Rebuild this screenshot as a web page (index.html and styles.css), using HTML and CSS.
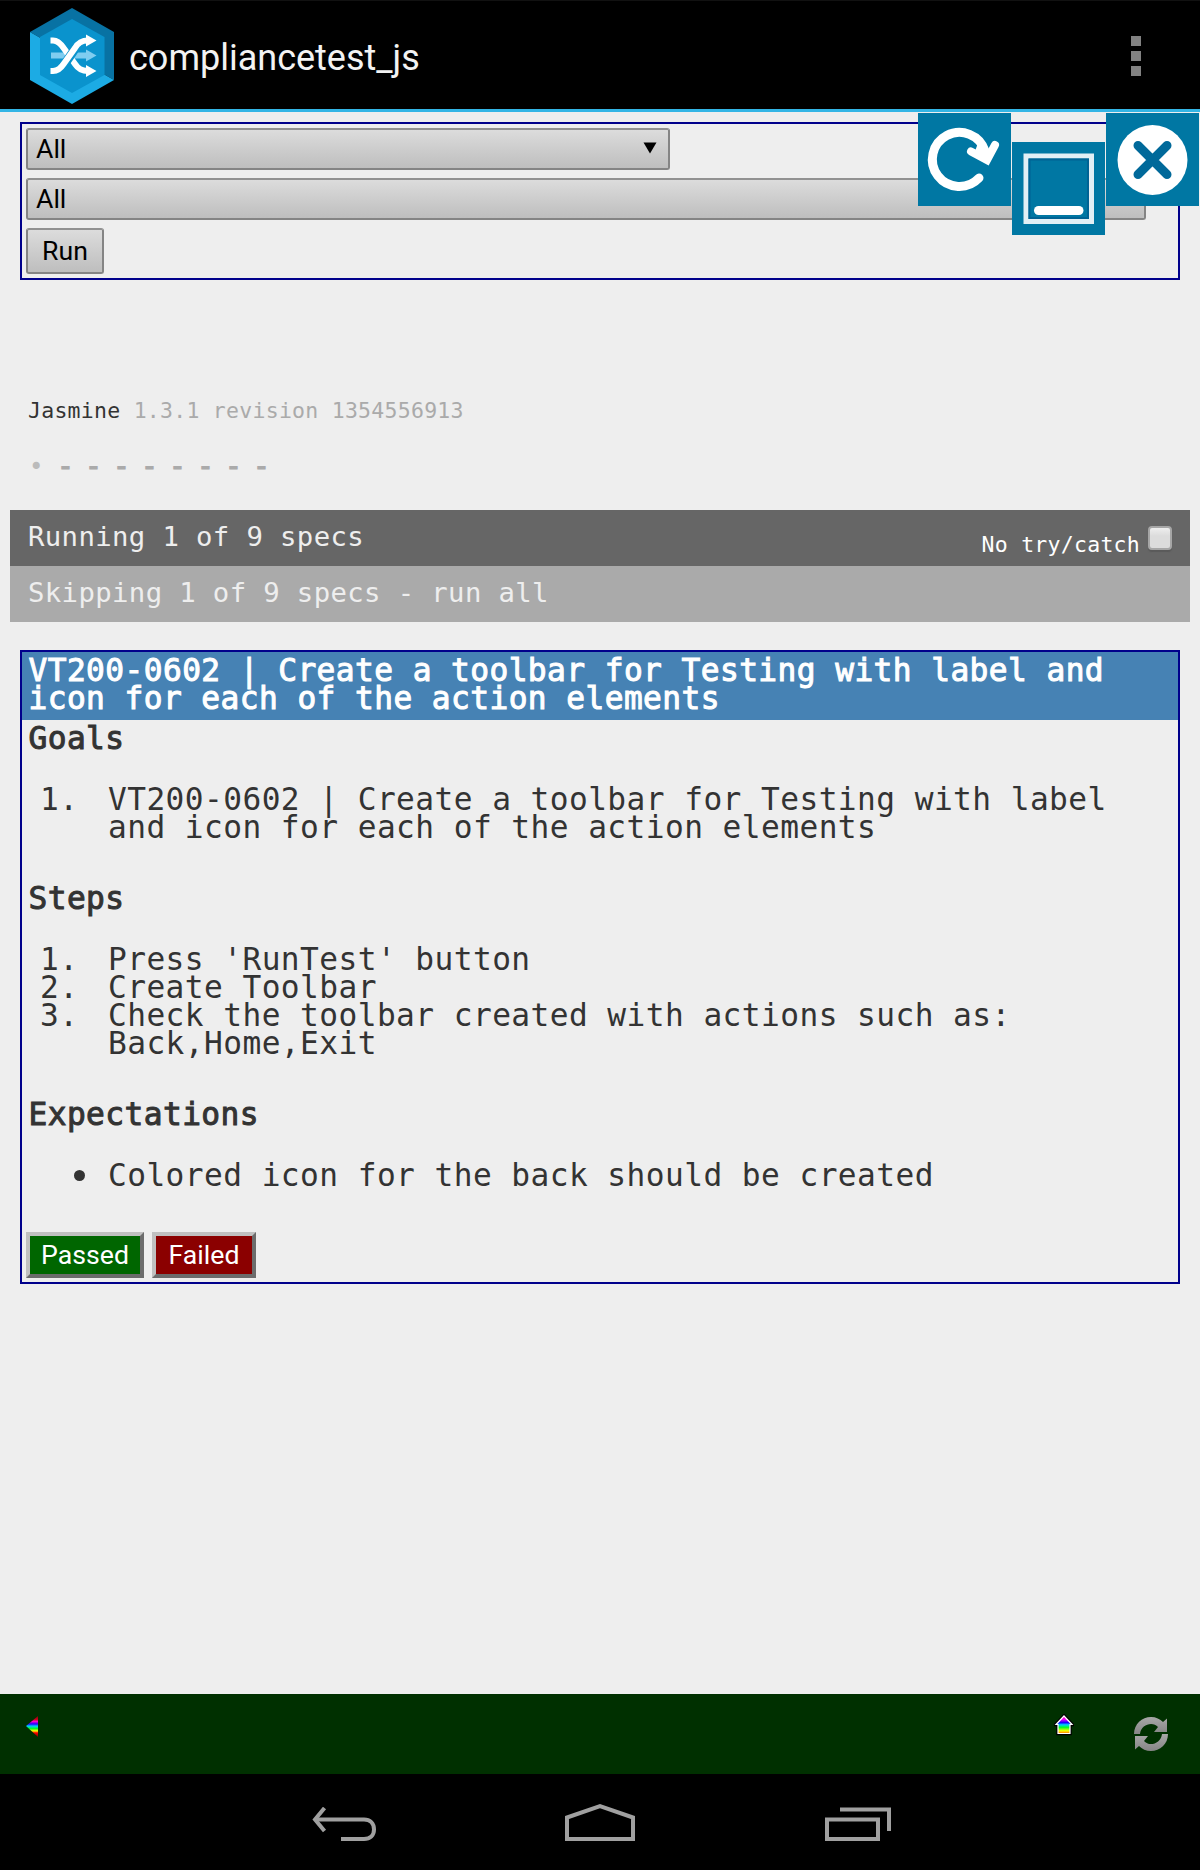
FILE: index.html
```html
<!DOCTYPE html>
<html lang="en">
<head>
<meta charset="utf-8">
<title>compliancetest_js</title>
<link rel="stylesheet" href="styles.css">
</head>
<body>
<header class="appbar">
  <svg class="logo" width="84" height="96" viewBox="0 0 84 96">
    <path fill="#0872a3" d="M42 0 84 24V72L42 48 0 24Z"/>
    <path fill="#1cabe4" d="M0 24 42 48 84 72 42 96 0 72Z"/>
    <path fill="#0a93cd" d="M42 11 74.500 29V67L42 85 10 67V29Z"/>
    <g fill="none" stroke-width="6">
      <path stroke="#7fcdf0" d="M21 47.500H58"/>
      <path stroke="#fff" d="M20.500 32.500H23C28 32.500 31 36 34 40.500L45 56C48 60.500 51 63 58 63"/>
      <path stroke="#0a93cd" stroke-width="9" d="M34 57 46 39.500"/>
      <path stroke="#fff" d="M20.500 63H23C28 63 31 60 34 55.500L45 40C48 35 51 32.500 58 32.500"/>
    </g>
    <path fill="#7fcdf0" d="M56 41.500v12l10.500-6z"/>
    <path fill="#fff" d="M56 26.500v12l10.500-6zM56 57v12l10.500-6z"/>
  </svg>
  <h1 class="title">compliancetest_js</h1>
  <div class="overflow"><i></i><i></i><i></i></div>
</header>

<main class="page">
  <section class="runner">
    <div class="select short"><span>All</span><svg width="14" height="12" viewBox="0 0 14 12"><path d="M0.500 0.500h13L7 11.500z"/></svg></div>
    <div class="select long"><span>All</span></div>
    <button class="run">Run</button>
  </section>

  <div class="overlay reload">
    <svg width="93" height="93" viewBox="0 0 93 93" fill="none" stroke="#fff" stroke-width="9" stroke-linecap="round">
      <path d="M61 65A27 27 0 1 1 67 38"/>
      <path stroke-width="8" d="M53 38.500 69 47 77 32"/>
      <path fill="#fff" stroke="none" d="M60 30 68 47 56 41z"/>
    </svg>
  </div>
  <div class="overlay minimize">
    <svg width="93" height="93" viewBox="0 0 93 93" fill="none" stroke="#fff">
      <path stroke="#e2eff5" stroke-width="5" d="M14 14H79.500V79.500H14z"/>
      <path stroke="#006394" stroke-width="2" d="M17.500 17.500H76V76H17.500z"/>
      <path stroke-width="9" stroke-linecap="round" d="M26.500 68.500H67"/>
    </svg>
  </div>
  <div class="overlay close">
    <svg width="93" height="93" viewBox="0 0 93 93">
      <circle cx="46.500" cy="47" r="35" fill="#fff"/>
      <path d="M32 32.500 61 61.500M61 32.500 32 61.500" stroke="#00699a" stroke-width="9" stroke-linecap="round"/>
    </svg>
  </div>

  <div class="banner"><b>Jasmine</b> 1.3.1 revision 1354556913</div>
  <div class="symbols"><span class="dot">•</span><span>-</span><span>-</span><span>-</span><span>-</span><span>-</span><span>-</span><span>-</span><span>-</span></div>

  <div class="bar running"><span>Running 1 of 9 specs</span><label class="trycatch">No try/catch<i class="box"></i></label></div>
  <div class="bar skipping"><span>Skipping 1 of 9 specs - run all</span></div>

  <section class="spec">
    <h2 class="spec-title">VT200-0602 | Create a toolbar for Testing with label and<br>icon for each of the action elements</h2>
    <h3>Goals</h3>
    <div class="list">
      <span class="mark">1.</span><p>VT200-0602 | Create a toolbar for Testing with label<br>and icon for each of the action elements</p>
    </div>
    <h3>Steps</h3>
    <div class="list">
      <span class="mark">1.</span><p>Press 'RunTest' button</p>
      <span class="mark">2.</span><p>Create Toolbar</p>
      <span class="mark">3.</span><p>Check the toolbar created with actions such as:<br>Back,Home,Exit</p>
    </div>
    <h3>Expectations</h3>
    <div class="list">
      <span class="mark"><i class="disc"></i></span><p>Colored icon for the back should be created</p>
    </div>
    <div class="verdict"><button class="pass">Passed</button><button class="fail">Failed</button></div>
  </section>
</main>

<footer class="toolbar">
  <svg class="tb-back" width="12" height="21" viewBox="0 0 12 21">
    <defs>
      <linearGradient id="g1" x1="0" y1="0" x2="0" y2="1">
        <stop offset="0" stop-color="#800"/><stop offset=".17" stop-color="#c02"/><stop offset=".26" stop-color="#f0c"/><stop offset=".38" stop-color="#20f"/><stop offset=".48" stop-color="#0cf"/><stop offset=".6" stop-color="#0f2"/><stop offset=".71" stop-color="#ff0"/><stop offset=".8" stop-color="#f00"/><stop offset="1" stop-color="#700"/>
      </linearGradient>
      <linearGradient id="g2" x1="0" y1="0" x2="0" y2="1">
        <stop offset="0" stop-color="#f08"/><stop offset=".2" stop-color="#e0f"/><stop offset=".38" stop-color="#10f"/><stop offset=".5" stop-color="#0cf"/><stop offset=".65" stop-color="#0f2"/><stop offset=".85" stop-color="#ff0"/><stop offset="1" stop-color="#f60"/>
      </linearGradient>
      <linearGradient id="g3" x1="0" y1="0" x2="0" y2="1">
        <stop offset="0" stop-color="#a8a8a8"/><stop offset="1" stop-color="#858585"/>
      </linearGradient>
    </defs>
    <path fill="url(#g1)" d="M12 0V21L0 10z"/>
  </svg>
  <svg class="tb-home" width="20" height="22" viewBox="0 0 20 22">
    <path fill="url(#g2)" stroke="#000" stroke-width="3.500" d="M10 2 18 10.500H16V19.500H4V10.500H2z"/>
    <path fill="url(#g2)" stroke="#fff" stroke-width="1.200" d="M10 2 18 10.500H16V19.500H4V10.500H2z"/>
  </svg>
  <svg class="tb-sync" width="36" height="36" viewBox="0 0 36 36">
    <path fill="url(#g3)" d="M1 18C1 8 9 1 18 1C23 1 27 3 30 6L34 2.500V16H21L25 11C20 5 8 8 7 18Z"/>
    <path fill="url(#g3)" d="M35 18C35 28 27 35 18 35C13 35 9 33 6 30L2 33.500V20H15L11 25C16 31 28 28 29 18Z"/>
  </svg>
</footer>
<nav class="sysnav">
  <svg width="64" height="36" viewBox="0 0 64 36" fill="none" stroke="#a0a0a0" stroke-width="4">
    <path d="M29 32H52C58 32 62 28.500 62 22.500S58 12.500 52 12.500H4"/><path d="M12.500 1 3 12.500 12.500 24"/>
  </svg>
  <svg width="72" height="40" viewBox="0 0 72 40" fill="none" stroke="#a0a0a0" stroke-width="4">
    <path d="M3 36V14.500L36 3 69 14.500V36Z"/>
  </svg>
  <svg width="68" height="36" viewBox="0 0 68 36" fill="none" stroke="#a0a0a0" stroke-width="4">
    <path d="M3 12.500H54V32H3Z"/><path d="M16 2.500H65V24"/>
  </svg>
</nav>
</body>
</html>
```

FILE: styles.css
```css
* { box-sizing: border-box; }
body {
  margin: 0;
  width: 1200px;
  height: 1870px;
  display: flex;
  flex-direction: column;
  background: #eee;
  color: #333;
  font-family: "DejaVu Sans Mono", monospace;
  overflow: hidden;
}
svg { display: block; }
h1, h2, h3, p { margin: 0; font-size: inherit; font-weight: 400; }
button { font: inherit; margin: 0; }

.appbar {
  height: 112px;
  display: flex;
  align-items: flex-start;
  background: #000;
  border-top: 1px solid #111;
  border-bottom: 3px solid #33b5e5;
  padding: 7px 59px 0 30px;
}
.title {
  margin-left: 15px;
  font: 36px/42px Roboto, sans-serif;
  color: #f3f3f3;
  padding-top: 29px;
}
.overflow { margin-left: auto; padding-top: 28px; display: grid; gap: 5px; }
.overflow i { width: 10px; height: 10px; background: #828282; }

.page { position: relative; height: 1582px; }

.runner {
  margin: 10px 20px 0;
  height: 158px;
  border: 2px solid #00008b;
  padding: 4px;
  display: flex;
  flex-direction: column;
  align-items: flex-start;
  gap: 8px;
  font: 26.67px/38px Roboto, sans-serif;
  color: #000;
}
.select, .run {
  border: 2px solid #848484;
  border-top-color: #919191;
  border-radius: 3px;
  background: linear-gradient(#dcdcdc, #bebebe);
}
.select {
  height: 42px;
  display: flex;
  justify-content: space-between;
  align-items: center;
  padding: 0 11px 0 8px;
}
.select svg { margin-top: -2px; }
.short { width: 644px; }
.long { width: 1120px; }
.run { width: 78px; height: 46px; padding: 0; line-height: 42px; color: #000; }

.overlay { position: absolute; width: 93px; height: 93px; background: #0077a3; }
.reload { left: 918px; top: 1px; }
.minimize { left: 1012px; top: 30px; }
.close { left: 1106px; top: 1px; }

.banner {
  margin: 117px 28px 0;
  font-size: 21.5px;
  letter-spacing: .26px;
  line-height: 28px;
  color: #aaa;
}
.banner b { font-weight: 400; color: #333; }
.symbols {
  display: flex;
  margin: 28px 28px 0;
  height: 28px;
  font-size: 28px;
  line-height: 28px;
  color: #aaa;
}
.symbols span { width: 28px; padding-left: 1px; -webkit-text-stroke: 1.2px #aaa; }
.symbols .dot { color: #bbb; font-size: 24px; -webkit-text-stroke: 0; }

.bar {
  margin: 0 10px;
  height: 56px;
  padding: 0 18px;
  display: flex;
  justify-content: space-between;
  font-size: 27.3px;
  letter-spacing: .37px;
  line-height: 54px;
  color: #eee;
}
.running { margin-top: 29px; background: #666; }
.skipping { background: #aaa; }
.trycatch {
  display: flex;
  font-size: 21.5px;
  letter-spacing: .26px;
  line-height: 70px;
  color: #fff;
}
.box {
  width: 24px;
  height: 24px;
  margin: 16px 0 0 8px;
  border: 2px solid #a6a6a6;
  border-radius: 4px;
  background: linear-gradient(#eee, #dcdcdc 40%);
  box-shadow: 0 2px 1px #5a5a5a;
}

.spec {
  margin: 28px 20px 0;
  height: 634px;
  border: 2px solid #00008b;
  font-size: 31.2px;
  letter-spacing: .43px;
  line-height: 28px;
}
.spec h3 { margin: -1px 0 33px; padding-left: 6.500px; -webkit-text-stroke: 1px #333; }
.spec .spec-title {
  height: 68px;
  padding: 4px 6.500px 0;
  background: #4682b4;
  color: #fff;
  -webkit-text-stroke: 1px #fff;
}
.spec-title + h3 { padding-top: 5px; }
.list {
  display: grid;
  grid-template-columns: 86px 1fr;
  margin-bottom: 44px;
}
.mark { padding-left: 18px; }
.disc {
  display: block;
  width: 11px;
  height: 11px;
  margin: 9px 0 0 34px;
  border-radius: 50%;
  background: #333;
}
.verdict {
  display: flex;
  gap: 8px;
  margin: -1px 0 0 4px;
  font: 26.67px/38px Roboto, sans-serif;
  letter-spacing: 0;
}
.verdict button {
  height: 46px;
  padding: 0;
  border: 4px solid;
  border-color: #c0c0c0 #6c6c6c #6c6c6c #c0c0c0;
  color: #fff;
}
.pass { width: 118px; background: #060; }
.fail { width: 104px; background: #8b0000; }

.toolbar {
  height: 80px;
  background: #003000;
  display: flex;
  align-items: flex-start;
  padding: 0 31px 0 26px;
}
.tb-back { margin-top: 22px; }
.tb-home { margin: 20px 59px 0 auto; }
.tb-sync { margin-top: 22px; }

.sysnav {
  height: 96px;
  background: #000;
  display: flex;
  align-items: flex-end;
  padding: 0 0 27px 312px;
}
.sysnav svg + svg { margin-left: 188px; }
```
